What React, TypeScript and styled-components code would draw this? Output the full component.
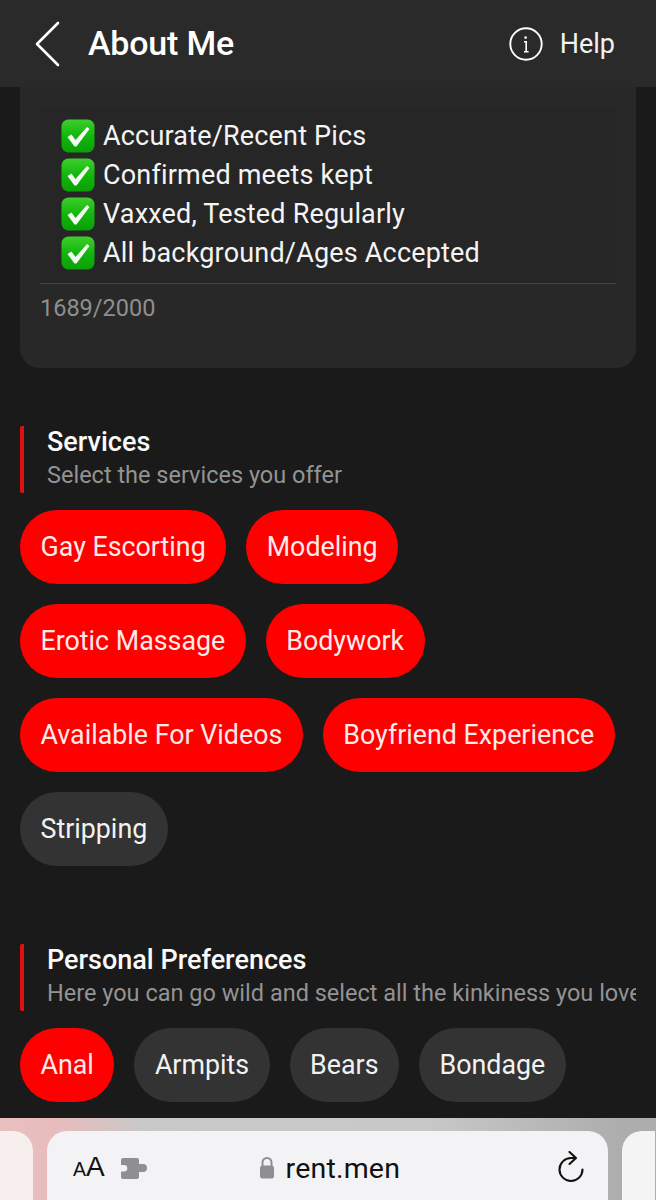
import React from "react";
import styled, { createGlobalStyle } from "styled-components";

const Global = createGlobalStyle`
  html, body { margin: 0; padding: 0; background: #1a1a1a; }
  * { box-sizing: border-box; }
  body { font-family: Roboto, "Liberation Sans", sans-serif; color: #fff; }
`;

const Page = styled.div`
  width: 656px;
  height: 1200px;
  display: flex;
  flex-direction: column;
  overflow: hidden;
  background: #1a1a1a;
`;

const Header = styled.header`
  height: 87px;
  flex: none;
  display: flex;
  align-items: center;
  background: #2a2a2a;
  padding: 0 41px 0 35px;
`;

const BackIcon = styled.svg`
  width: 25px;
  height: 46px;
  flex: none;
`;

const Title = styled.h1`
  margin: 0 0 2px 28px;
  flex: 1;
  font-size: 34px;
  font-weight: 500;
  line-height: 38px;
  letter-spacing: -0.2px;
`;

const HelpLink = styled.div`
  display: flex;
  align-items: center;
  gap: 17px;
  font-size: 27px;
  color: #f2f2f2;
`;

const Content = styled.main`
  flex: 1;
  min-height: 0;
  overflow: hidden;
  padding: 0 20px;
`;

const Card = styled.section`
  height: 281px;
  background: #282828;
  border-radius: 0 0 20px 20px;
  padding: 20px 20px 0;
`;

const Bio = styled.div`
  height: 177px;
  padding: 9px 21px 0;
  background: #262626;
  border-bottom: 1px solid #444;
`;

const BioLine = styled.div`
  display: flex;
  align-items: center;
  gap: 8px;
  height: 39px;
  font-size: 27px;
  letter-spacing: 0.18px;
  color: #f4f4f4;
`;

const Counter = styled.div`
  margin-top: 10px;
  font-size: 23.5px;
  line-height: 28px;
  color: #8f8f8f;
`;

const Section = styled.section<{ $top: number }>`
  margin-top: ${(p) => p.$top}px;
`;

const SectionHead = styled.div`
  height: 67px;
  border-left: 4px solid #e01010;
  border-radius: 2px;
  padding-left: 23px;
  overflow: hidden;
  white-space: nowrap;
`;

const SectionTitle = styled.h2`
  margin: 0;
  font-size: 27px;
  font-weight: 500;
  line-height: 32px;
  color: #fafafa;
`;

const SectionHint = styled.p`
  margin: 0;
  font-size: 23.5px;
  line-height: 34px;
  color: #939393;
`;

const Chips = styled.div`
  display: flex;
  flex-wrap: wrap;
  gap: 20px;
  margin-top: 17px;
`;

const Chip = styled.span<{ $on?: boolean }>`
  height: 74px;
  display: flex;
  align-items: center;
  padding: 0 20.5px 1px;
  border-radius: 37px;
  font-size: 26.8px;
  white-space: nowrap;
  background: ${(p) => (p.$on ? "#fe0000" : "#333333")};
  color: ${(p) => (p.$on ? "#ffeaea" : "#f2f2f2")};
`;

const BrowserBar = styled.footer`
  height: 82px;
  flex: none;
  display: flex;
  gap: 14px;
  padding-top: 13px;
  background: linear-gradient(90deg, #e9c0c0 0%, #e8bcbc 8%, #c9c9c9 22%, #c8c8c8 65%, #adadad 95%);
`;

const SideTab = styled.div<{ $side: "left" | "right" }>`
  width: 33px;
  flex: none;
  background: ${(p) => (p.$side === "left" ? "#f7eeee" : "#f4f4f4")};
  border-radius: ${(p) => (p.$side === "left" ? "0 20px 0 0" : "20px 0 0 0")};
`;

const AddressField = styled.div`
  width: 561px;
  flex: none;
  display: flex;
  align-items: center;
  padding: 5px 24px 0 26px;
  background: #f3f3f5;
  border-radius: 20px 20px 0 0;
  color: #111;
`;

const TextSize = styled.span`
  font-family: "Liberation Sans", sans-serif;
  font-size: 28px;
  line-height: 30px;
`;

const SmallA = styled.span`
  font-size: 19.5px;
`;

const PuzzleIcon = styled.svg`
  width: 26px;
  height: 21px;
  margin-left: 16px;
  flex: none;
`;

const Host = styled.div`
  flex: 1;
  display: flex;
  align-items: center;
  justify-content: center;
  gap: 11px;
  margin-right: 45px;
  font-size: 28.5px;
  letter-spacing: 0.2px;
`;

const LockIcon = styled.svg`
  width: 16px;
  height: 22px;
  flex: none;
`;

const ReloadIcon = styled.svg`
  width: 27px;
  height: 32px;
  flex: none;
  margin-top: -2px;
`;

const CheckBox = styled.svg`
  width: 34px;
  height: 34px;
  flex: none;
`;

// Green tick square used as the bullet of every line in the bio
const Tick = () => (
  <CheckBox viewBox="0 0 34 34">
    <defs>
      <linearGradient id="tickFill" x1="0" y1="0" x2="0" y2="1">
        <stop offset="0" stopColor="#3fce2c" />
        <stop offset="0.5" stopColor="#13b60d" />
        <stop offset="1" stopColor="#0a9f06" />
      </linearGradient>
    </defs>
    <rect x="0.5" y="0.5" width="33" height="33" rx="7" fill="url(#tickFill)" />
    <path d="M6.5 18 L10.5 15.5 L14.5 21 L26 8 L28.5 10 L15.5 27.5 H13.5 Z" fill="#f4fbf2" />
  </CheckBox>
);

const bio = [
  "Accurate/Recent Pics",
  "Confirmed meets kept",
  "Vaxxed, Tested Regularly",
  "All background/Ages Accepted",
];

const services: [string, boolean][] = [
  ["Gay Escorting", true],
  ["Modeling", true],
  ["Erotic Massage", true],
  ["Bodywork", true],
  ["Available For Videos", true],
  ["Boyfriend Experience", true],
  ["Stripping", false],
];

const preferences: [string, boolean][] = [
  ["Anal", true],
  ["Armpits", false],
  ["Bears", false],
  ["Bondage", false],
];

export default function App() {
  return (
    <Page>
      <Global />
      <Header>
        <BackIcon viewBox="0 0 25 46">
          <path d="M23 2 L2 23 L23 44" fill="none" stroke="#fff" strokeWidth="2.6" strokeLinecap="round" strokeLinejoin="round" />
        </BackIcon>
        <Title>About Me</Title>
        <HelpLink>
          <svg width="34" height="34" viewBox="0 0 34 34">
            <circle cx="17" cy="17" r="15.7" fill="none" stroke="#fff" strokeWidth="1.9" />
            <circle cx="16.6" cy="10.6" r="1.3" fill="#fff" />
            <path d="M15 14.8 H17.2 V24.6 M15 24.8 H19.6" fill="none" stroke="#fff" strokeWidth="1.6" />
          </svg>
          Help
        </HelpLink>
      </Header>
      <Content>
        <Card>
          <Bio>
            {bio.map((line) => (
              <BioLine key={line}>
                <Tick />
                {line}
              </BioLine>
            ))}
          </Bio>
          <Counter>1689/2000</Counter>
        </Card>
        <Section $top={58}>
          <SectionHead>
            <SectionTitle>Services</SectionTitle>
            <SectionHint>Select the services you offer</SectionHint>
          </SectionHead>
          <Chips>
            {services.map(([name, on]) => (
              <Chip key={name} $on={on}>
                {name}
              </Chip>
            ))}
          </Chips>
        </Section>
        <Section $top={78}>
          <SectionHead>
            <SectionTitle>Personal Preferences</SectionTitle>
            <SectionHint>Here you can go wild and select all the kinkiness you love</SectionHint>
          </SectionHead>
          <Chips>
            {preferences.map(([name, on]) => (
              <Chip key={name} $on={on}>
                {name}
              </Chip>
            ))}
          </Chips>
        </Section>
      </Content>
      <BrowserBar>
        <SideTab $side="left" />
        <AddressField>
          <TextSize>
            <SmallA>A</SmallA>A
          </TextSize>
          <PuzzleIcon viewBox="0 0 26 21">
            <path
              d="M2 0 H16 Q18 0 18 2 V6 H22 A4 4 0 0 1 22 14 H18 V19 Q18 21 16 21 H2 Q0 21 0 19 V13.5 H3 A3.2 3.2 0 0 0 3 7 H0 V2 Q0 0 2 0 Z"
              fill="#8e8e93"
            />
          </PuzzleIcon>
          <Host>
            <LockIcon viewBox="0 0 16 22">
              <path d="M3.5 10 V5.5 A4.5 4.5 0 0 1 12.5 5.5 V10" fill="none" stroke="#8e8e93" strokeWidth="2" />
              <rect x="1" y="8.5" width="14" height="13" rx="2.5" fill="#8e8e93" />
            </LockIcon>
            rent.men
          </Host>
          <ReloadIcon viewBox="0 0 27 32">
            <path d="M18.5 7 H14 A11.5 11.5 0 1 0 25.5 18.5 M12.5 1 L19 7 L12.5 13" fill="none" stroke="#111" strokeWidth="2.1" strokeLinecap="round" strokeLinejoin="round" />
          </ReloadIcon>
        </AddressField>
        <SideTab $side="right" />
      </BrowserBar>
    </Page>
  );
}
